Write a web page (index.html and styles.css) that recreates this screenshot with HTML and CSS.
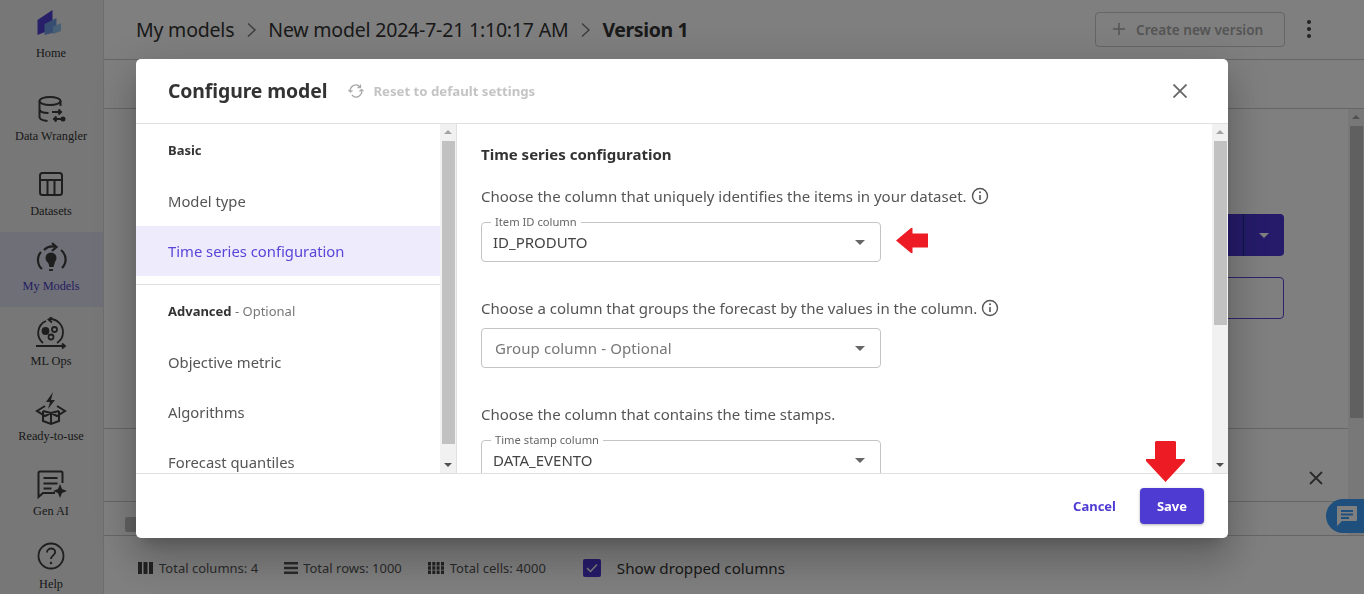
FILE: index.html
```html
<!DOCTYPE html>
<html lang="en">
<head>
    <meta charset="UTF-8">
    <meta name="viewport" content="width=device-width, initial-scale=1.0">
    <title>Configure model</title>
    <link rel="stylesheet" href="styles.css">
</head>
<body>
    <div class="app">
        <nav class="sidebar">
            <a class="side-item side-home">
                <svg class="side-icon" viewBox="0 0 34 34">
                    <polygon points="3.500,11 18.500,1 18.500,20 3.500,26" fill="#4f3fd0"/>
                    <polygon points="10.500,15 22.500,9 22.500,23 10.500,26" fill="#6f9be2"/>
                    <polygon points="19,18 27,14 27,22 19,25" fill="#8fc0ea"/>
                </svg>
                <span>Home</span>
            </a>
            <a class="side-item">
                <svg class="side-icon" viewBox="0 0 34 34" fill="none" stroke="#3c3c3c" stroke-width="2">
                    <ellipse cx="16" cy="9" rx="10.500" ry="4"/>
                    <path d="M5.500 9v16c0 2 3 3.500 8 4M26.500 9v5M5.500 17c0 2.500 4 4 9 4"/>
                    <path d="M18 20h9M24.500 17.500l2.500 2.500-2.500 2.500M29 27h-9M22.500 24.500L20 27l2.500 2.500"/>
                    <circle cx="29" cy="27" r="1.500" fill="#3c3c3c"/>
                </svg>
                <span>Data Wrangler</span>
            </a>
            <a class="side-item">
                <svg class="side-icon" viewBox="0 0 34 34" fill="none" stroke="#3c3c3c" stroke-width="2">
                    <rect x="6" y="6" width="22" height="22" rx="2.500"/>
                    <path d="M6 13h22M13.500 13v15M20.500 13v15"/>
                </svg>
                <span>Datasets</span>
            </a>
            <a class="side-item active">
                <svg class="side-icon" viewBox="0 0 34 34" fill="none" stroke="#3c3c3c" stroke-width="2.200">
                    <path d="M8 27a12 12 0 0 1-1-17M27 8a12 12 0 0 1 1 18"/>
                    <path d="M10 8a12 12 0 0 1 12-3M18 1l4.500 4-4.500 4"/>
                    <circle cx="17" cy="16" r="5.500" fill="#3c3c3c" stroke="none"/>
                    <path d="M14 20l1.500 5h4l1.500-5z" fill="#3c3c3c" stroke="none"/>
                    <path d="M15 28h4" stroke-width="1.800"/>
                </svg>
                <span>My Models</span>
            </a>
            <a class="side-item">
                <svg class="side-icon" viewBox="0 0 34 34" fill="none" stroke="#3c3c3c" stroke-width="1.800">
                    <path d="M9 26a13 13 0 0 1 3-22M16 2a13 13 0 0 1 13 13 13 13 0 0 1-6 11"/>
                    <path d="M18 0l-3.500 2.500L18 5.500"/>
                    <path d="M2 29h28M28 26.500l3 2.500-3 2.500"/>
                    <circle cx="11.500" cy="14" r="3" fill="#3c3c3c"/>
                    <circle cx="20.500" cy="12.500" r="2.500"/>
                    <circle cx="17" cy="20" r="2.500"/>
                </svg>
                <span>ML Ops</span>
            </a>
            <a class="side-item">
                <svg class="side-icon" viewBox="0 0 34 34" fill="none" stroke="#3c3c3c" stroke-width="2">
                    <path d="M9 19v10l8 3 8-3V19M17 21v11"/>
                    <path d="M11 14l-8 5 8 5 6-3 6 3 8-5-8-5M9 19l8 2 8-2"/>
                    <path d="M19 0l-7 10h4l-2 7 7-9h-4z" fill="#3c3c3c" stroke="none"/>
                </svg>
                <span>Ready-to-use</span>
            </a>
            <a class="side-item">
                <svg class="side-icon" viewBox="0 0 34 34" fill="none" stroke="#3c3c3c" stroke-width="2">
                    <path d="M21 26H9l-4.500 4V6a1.500 1.500 0 0 1 1.500-1.500h21A1.500 1.500 0 0 1 28.500 6v10"/>
                    <path d="M9.500 11h14M9.500 16.500h14M9.500 21.500h8"/>
                    <path d="M26 17l2 5 5 2-5 2-2 5-2-5-5-2 5-2z" fill="#3c3c3c" stroke="none"/>
                </svg>
                <span>Gen AI</span>
            </a>
            <a class="side-item side-help">
                <svg class="side-icon" viewBox="0 0 34 34" fill="none" stroke="#3c3c3c" stroke-width="1.800">
                    <circle cx="17" cy="17" r="12.500"/>
                    <path d="M13 13.500c0-2.500 2-4 4.200-4s4 1.500 4 3.600c0 3.400-4.200 3.200-4.200 6.900"/>
                    <circle cx="17" cy="24" r="1.200" fill="#3c3c3c" stroke="none"/>
                </svg>
                <span>Help</span>
            </a>
        </nav>

        <main class="main">
            <header class="page-header">
                <div class="crumbs">
                    <span>My models</span>
                    <svg class="crumb-sep" viewBox="0 0 10 16"><path d="M1.500 1.500L8.500 8l-7 6.500" fill="none" stroke="#777" stroke-width="1.400"/></svg>
                    <span>New model 2024-7-21 1:10:17 AM</span>
                    <svg class="crumb-sep" viewBox="0 0 10 16"><path d="M1.500 1.500L8.500 8l-7 6.500" fill="none" stroke="#777" stroke-width="1.400"/></svg>
                    <strong>Version 1</strong>
                </div>
                <div class="header-actions">
                    <button class="create-btn">
                        <svg viewBox="0 0 14 14" width="14" height="14"><path d="M7 1v12M1 7h12" fill="none" stroke="#aaa" stroke-width="1.500"/></svg>
                        Create new version
                    </button>
                    <div class="dots"><i></i><i></i><i></i></div>
                </div>
            </header>
            <div class="tabs"></div>
            <div class="work">
                <div class="work-main">
                    <section class="build">
                        <div class="split-btn"><span class="split-caret"></span></div>
                        <div class="outline-btn"></div>
                    </section>
                    <section class="notice">
                        <svg viewBox="0 0 14 14" width="14" height="14"><path d="M1 1l12 12M13 1L1 13" fill="none" stroke="#555" stroke-width="1.800"/></svg>
                    </section>
                    <section class="preview-bar">
                        <span class="minus-box"></span>
                    </section>
                </div>
                <div class="scrollbar page-bar">
                    <span class="arrow-up"></span>
                    <span class="thumb"></span>
                </div>
            </div>
            <footer class="page-footer">
                <span class="stat">
                    <svg viewBox="0 0 15 12" width="15" height="12" fill="#444"><path d="M0 0h4v12H0zM5.500 0h4v12h-4zM11 0h4v12h-4z"/></svg>
                    Total columns: 4
                </span>
                <span class="stat">
                    <svg viewBox="0 0 14 12" width="14" height="12" fill="#555"><path d="M0 0h14v2.500H0zM0 4.700h14v2.500H0zM0 9.500h14V12H0z"/></svg>
                    Total rows: 1000
                </span>
                <span class="stat stat-cells">
                    <svg viewBox="0 0 16 12" width="16" height="12" fill="#444"><path d="M0 0h3v3.500H0zM4.300 0h3v3.500h-3zM8.600 0h3v3.500h-3zM13 0h3v3.500h-3zM0 4.300h3v3.500H0zM4.300 4.300h3v3.500h-3zM8.600 4.300h3v3.500h-3zM13 4.300h3v3.500h-3zM0 8.500h3V12H0zM4.300 8.500h3V12h-3zM8.600 8.500h3V12h-3zM13 8.500h3V12h-3z"/></svg>
                    Total cells: 4000
                </span>
                <label class="dropped">
                    <span class="checkbox">
                        <svg viewBox="0 0 12 10" width="12" height="10"><path d="M1 5l3.500 3.500L11 1.500" fill="none" stroke="#fff" stroke-width="1.500"/></svg>
                    </span>
                    Show dropped columns
                </label>
            </footer>
        </main>
    </div>

    <div class="chat-bubble">
        <svg viewBox="0 0 22 22" width="22" height="22"><path d="M2 1h18a1 1 0 0 1 1 1v13a1 1 0 0 1-1 1H6l-5 5V2a1 1 0 0 1 1-1zM5 5v2h12V5zM5 8.500v2h12v-2zM5 12v2h8v-2z" fill="#fff" fill-rule="evenodd"/></svg>
    </div>

    <div class="overlay">
        <div class="modal">
            <div class="modal-head">
                <h2>Configure model</h2>
                <span class="reset">
                    <svg viewBox="0 0 16 14" width="16" height="14" fill="none" stroke="#aaa" stroke-width="1.300">
                        <path d="M2.500 8a5.500 5.500 0 0 1 9.500-5"/>
                        <path d="M13.500 6a5.500 5.500 0 0 1-9.500 5"/>
                        <path d="M12.500 .5V3.500H9.500M.5 6l2 2 2-1.500M11.500 7.500l2-2 2 1.500"/>
                    </svg>
                    Reset to default settings
                </span>
                <svg class="modal-close" viewBox="0 0 14 14" width="14" height="14"><path d="M.5.500l13 13M13.500.500l-13 13" fill="none" stroke="#666" stroke-width="1.800"/></svg>
            </div>
            <div class="modal-body">
                <div class="config-nav">
                    <div class="nav-title nav-basic">Basic</div>
                    <div class="nav-item">Model type</div>
                    <div class="nav-item selected">Time series configuration</div>
                    <hr class="nav-rule">
                    <div class="nav-title nav-advanced">Advanced <span>- Optional</span></div>
                    <div class="nav-item">Objective metric</div>
                    <div class="nav-item">Algorithms</div>
                    <div class="nav-item">Forecast quantiles</div>
                </div>
                <div class="scrollbar nav-bar">
                    <span class="arrow-up"></span>
                    <span class="thumb"></span>
                    <span class="arrow-down"></span>
                </div>
                <div class="config-form">
                    <h3>Time series configuration</h3>
                    <div class="form-block">
                        <p>Choose the column that uniquely identifies the items in your dataset.
                            <svg class="info" viewBox="0 0 18 18" width="18" height="18"><circle cx="9" cy="9" r="7.500" fill="none" stroke="#555" stroke-width="1.400"/><path d="M9 8v5" stroke="#555" stroke-width="1.600"/><circle cx="9" cy="5.300" r="1" fill="#555"/></svg>
                        </p>
                        <div class="select">
                            <span class="select-label">Item ID column</span>
                            <span class="select-value">ID_PRODUTO</span>
                            <span class="caret"></span>
                        </div>
                    </div>
                    <div class="form-block no-legend">
                        <p>Choose a column that groups the forecast by the values in the column.
                            <svg class="info" viewBox="0 0 18 18" width="18" height="18"><circle cx="9" cy="9" r="7.500" fill="none" stroke="#555" stroke-width="1.400"/><path d="M9 8v5" stroke="#555" stroke-width="1.600"/><circle cx="9" cy="5.300" r="1" fill="#555"/></svg>
                        </p>
                        <div class="select">
                            <span class="select-holder">Group column - Optional</span>
                            <span class="caret"></span>
                        </div>
                    </div>
                    <div class="form-block">
                        <p>Choose the column that contains the time stamps.</p>
                        <div class="select">
                            <span class="select-label">Time stamp column</span>
                            <span class="select-value">DATA_EVENTO</span>
                            <span class="caret"></span>
                        </div>
                    </div>
                </div>
                <div class="scrollbar form-bar">
                    <span class="arrow-up"></span>
                    <span class="thumb"></span>
                    <span class="arrow-down"></span>
                </div>
            </div>
            <div class="modal-foot">
                <button class="btn-cancel">Cancel</button>
                <button class="btn-save">Save</button>
            </div>
        </div>
    </div>

    <!-- red marks drawn on top of the screenshot -->
    <svg class="mark mark-left" viewBox="0 0 32 25" width="32" height="25"><path d="M0 12.500L15 0h1.500v5.500H32v14H16.500V25H15z" fill="#ed1c24"/></svg>
    <svg class="mark mark-down" viewBox="0 0 39 41" width="39" height="41"><path d="M9 1l1-1h19l1 1v17h9v2L19.500 41 0 20v-2h9z" fill="#ed1c24"/></svg>
</body>
</html>
```

FILE: styles.css
```css
* {
    box-sizing: border-box;
}
html, body {
    margin: 0;
    height: 100%;
    overflow: hidden;
}
body {
    font-family: "Noto Sans", sans-serif;
    background-color: #fff;
    color: #333;
}
.app {
    display: flex;
    height: 594px;
}

/* sidebar */
.sidebar {
    width: 104px;
    flex-shrink: 0;
    background-color: #eee;
    border-right: 1px solid #ddd;
    overflow: hidden;
}
.side-item {
    display: flex;
    flex-direction: column;
    align-items: center;
    height: 75px;
    padding: 10px 1px 0 0;
    font-family: "Liberation Serif", serif;
    font-size: 12.300px;
    line-height: 14px;
    color: #333;
}
.side-item span {
    margin-top: 3px;
}
.side-home {
    height: 82px;
    padding-top: 9px;
}
.side-help {
    padding-top: 7px;
}
.side-help span {
    margin-top: 4px;
}
.side-icon {
    width: 34px;
    height: 34px;
}
.side-item.active {
    background-color: #dedeef;
    color: #4a3fc0;
}

/* page under the dialog */
.main {
    flex: 1;
    min-width: 0;
    display: flex;
    flex-direction: column;
}
.page-header {
    display: flex;
    align-items: center;
    justify-content: space-between;
    height: 60px;
    padding: 0 53px 0 32px;
    border-bottom: 1px solid #ccc;
}
.crumbs {
    display: flex;
    align-items: center;
    gap: 10.500px;
    font-size: 19.500px;
    letter-spacing: -0.2px;
}
.crumbs strong {
    font-weight: 700;
    letter-spacing: -0.4px;
}
.crumb-sep {
    width: 13px;
    height: 16px;
}
.header-actions {
    display: flex;
    align-items: center;
    gap: 22px;
    margin-top: -1px;
}
.create-btn {
    display: flex;
    align-items: center;
    gap: 10px;
    width: 190px;
    height: 35px;
    padding: 0 0 0 16px;
    background: none;
    border: 1px solid #ccc;
    border-radius: 4px;
    font-family: inherit;
    font-size: 13.600px;
    font-weight: 600;
    color: #aaa;
}
.dots {
    display: flex;
    flex-direction: column;
    gap: 3px;
}
.dots i {
    width: 4px;
    height: 4px;
    border-radius: 50%;
    background-color: #444;
}
.tabs {
    height: 49px;
    flex-shrink: 0;
    border-bottom: 1px solid #ccc;
}
.work {
    display: flex;
    height: 427px;
    flex-shrink: 0;
    border-bottom: 1px solid #ccc;
}
.work-main {
    flex: 1;
    display: flex;
    flex-direction: column;
}
.build {
    height: 320px;
    flex-shrink: 0;
    display: flex;
    flex-direction: column;
    align-items: flex-end;
    gap: 21px;
    padding: 105px 64px 0 0;
    border-bottom: 1px solid #ccc;
}
.split-btn {
    display: flex;
    align-items: center;
    justify-content: flex-end;
    width: 200px;
    height: 42px;
    padding-right: 15px;
    background-color: #4a36d4;
    border-radius: 4px;
    position: relative;
}
.split-btn::after {
    content: "";
    position: absolute;
    top: 0;
    bottom: 0;
    right: 40px;
    width: 1px;
    background-color: #1f2a90;
}
.split-caret {
    border-left: 5px solid transparent;
    border-right: 5px solid transparent;
    border-top: 5px solid #fff;
}
.outline-btn {
    width: 200px;
    height: 42px;
    border: 1px solid #5a46d8;
    border-radius: 4px;
}
.notice {
    height: 73px;
    flex-shrink: 0;
    display: flex;
    justify-content: flex-end;
    padding: 42px 25px 0 0;
    border-bottom: 1px solid #ccc;
}
.preview-bar {
    flex: 1;
    padding: 15px 0 0 21px;
}
.minus-box {
    display: block;
    width: 14px;
    height: 15px;
    background-color: #c4c4c4;
    border-radius: 2px;
}
.page-footer {
    display: flex;
    align-items: center;
    flex: 1;
    padding: 6px 0 0 34px;
    font-size: 13px;
    color: #555;
}
.stat {
    display: flex;
    align-items: center;
    gap: 5px;
    margin-right: 26px;
}
.stat:first-child,
.stat-cells {
    gap: 6px;
}
.dropped {
    display: flex;
    align-items: center;
    gap: 16px;
    margin-left: 11px;
    font-size: 15.200px;
    color: #333;
}
.checkbox {
    display: flex;
    align-items: center;
    justify-content: center;
    width: 18px;
    height: 18px;
    background-color: #4a36d4;
    border-radius: 2px;
}

/* scrollbars */
.scrollbar {
    display: flex;
    flex-direction: column;
    align-items: center;
    width: 16px;
    flex-shrink: 0;
    background-color: #f1f1f1;
}
.arrow-up,
.arrow-down {
    flex-shrink: 0;
    width: 8px;
    height: 4px;
    border-left: 4px solid transparent;
    border-right: 4px solid transparent;
}
.arrow-up {
    margin-top: 6px;
    border-bottom: 4px solid #a3a3a3;
}
.arrow-down {
    margin-top: auto;
    margin-bottom: 6px;
    border-top: 4px solid #505050;
}
.thumb {
    width: 13px;
    margin-top: 7px;
    background-color: #c1c1c1;
}
.page-bar .thumb {
    height: 292px;
}
.nav-bar .thumb {
    height: 303px;
}
.form-bar .thumb {
    height: 184px;
}

/* dialog */
.overlay {
    position: fixed;
    inset: 0;
    padding: 59px 136px;
    background-color: rgba(0, 0, 0, 0.5);
}
.modal {
    display: flex;
    flex-direction: column;
    width: 1092px;
    height: 479px;
    background-color: #fff;
    border-radius: 5px;
    box-shadow: 0 11px 15px -7px rgba(0, 0, 0, 0.2), 0 24px 38px 3px rgba(0, 0, 0, 0.14), 0 9px 46px 8px rgba(0, 0, 0, 0.12);
    overflow: hidden;
}
.modal-head {
    display: flex;
    align-items: center;
    height: 65px;
    flex-shrink: 0;
    padding: 0 41px 0 32px;
    border-bottom: 1px solid #e0e0e0;
}
.modal-head h2 {
    margin: -2px 0 0;
    font-size: 19.400px;
    font-weight: 700;
    letter-spacing: -0.1px;
    color: #333;
}
.reset {
    display: flex;
    align-items: center;
    gap: 9px;
    margin-left: 21px;
    font-size: 13.200px;
    font-weight: 700;
    color: #c4c4c4;
}
.modal-close {
    margin-left: auto;
}
.modal-body {
    flex: 1;
    min-height: 0;
    display: flex;
}
.config-nav {
    width: 304px;
    flex-shrink: 0;
    overflow: hidden;
}
.nav-bar {
    border-right: 1px solid #e0e0e0;
    width: 17px;
}
.nav-title {
    height: 50px;
    padding-left: 32px;
    font-size: 13px;
    font-weight: 700;
    line-height: 50px;
    color: #333;
}
.nav-title span {
    font-weight: 400;
    color: #777;
}
.nav-basic {
    height: 52px;
    line-height: 53px;
}
.nav-advanced {
    line-height: 52px;
    height: 52px;
}
.nav-item {
    height: 50px;
    padding-left: 32px;
    font-size: 14.800px;
    line-height: 50px;
    color: #555;
}
.nav-item.selected {
    background-color: #eeebfd;
    color: #5a45d8;
}
.nav-rule {
    margin: 8px 0 0;
    border: 0;
    border-top: 1px solid #e0e0e0;
}
.config-form {
    flex: 1;
    min-width: 0;
    padding: 20px 0 0 24px;
    overflow: hidden;
}
.config-form h3 {
    margin: 0 0 22px;
    font-size: 15px;
    font-weight: 700;
    line-height: 20px;
    color: #333;
}
.form-block {
    margin-bottom: 36px;
}
.form-block p {
    display: flex;
    align-items: center;
    gap: 4px;
    margin: 0 0 16px;
    font-size: 15px;
    line-height: 20px;
    color: #555;
}
.form-block.no-legend p {
    margin-bottom: 10px;
}
.select {
    position: relative;
    display: flex;
    align-items: center;
    width: 400px;
    height: 40px;
    padding: 0 15px 0 11px;
    border: 1px solid #c4c4c4;
    border-radius: 4px;
    font-size: 15px;
}
.select-label {
    position: absolute;
    top: -8px;
    left: 9px;
    padding: 0 4px;
    background-color: #fff;
    font-size: 11.200px;
    line-height: 14px;
    color: #666;
}
.select-value {
    color: #444;
}
.select-holder {
    padding-left: 2px;
    letter-spacing: 0.1px;
    color: #777;
}
.caret {
    margin-left: auto;
    border-left: 5.500px solid transparent;
    border-right: 5.500px solid transparent;
    border-top: 5.500px solid #666;
}
.modal-foot {
    display: flex;
    align-items: center;
    justify-content: flex-end;
    gap: 24px;
    height: 65px;
    flex-shrink: 0;
    padding: 0 24px 0 0;
    border-top: 1px solid #e0e0e0;
}
.btn-cancel,
.btn-save {
    font-family: inherit;
    font-size: 13px;
    font-weight: 700;
    border: none;
    cursor: pointer;
}
.btn-cancel {
    padding: 0;
    background: none;
    color: #4d3bd2;
}
.btn-save {
    width: 64px;
    height: 36px;
    background-color: #4d3bd2;
    border-radius: 4px;
    color: #fff;
    box-shadow: 0 1px 3px rgba(0, 0, 0, 0.3);
}

/* things that sit over the page */
.chat-bubble {
    position: fixed;
    top: 499px;
    right: -20px;
    display: flex;
    align-items: center;
    width: 58px;
    height: 34px;
    padding-left: 10px;
    background-color: #3f9ef8;
    border-radius: 17px;
}
.mark {
    position: fixed;
    z-index: 2;
}
.mark-left {
    left: 896px;
    top: 228px;
}
.mark-down {
    left: 1146px;
    top: 441px;
}
```
